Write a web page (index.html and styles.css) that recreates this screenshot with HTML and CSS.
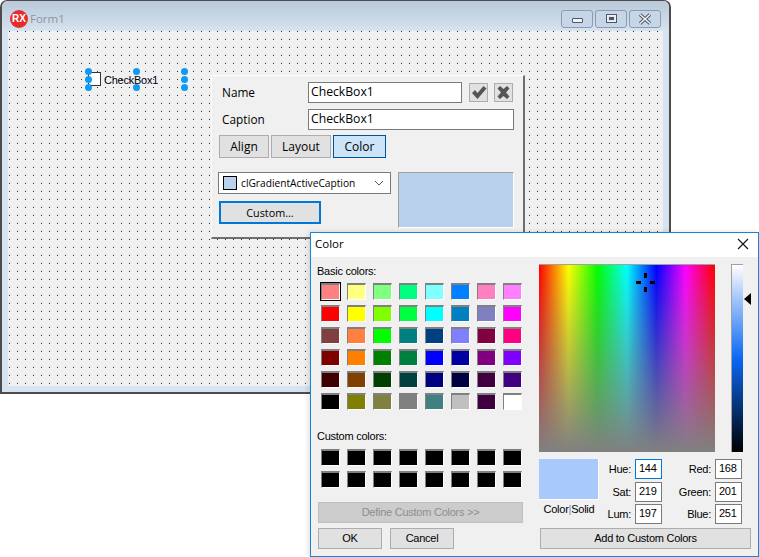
FILE: index.html
```html
<!DOCTYPE html>
<html lang="en">
<head>
  <meta charset="UTF-8">
  <meta name="viewport" content="width=device-width, initial-scale=1.0">
  <title>Form1</title>
  <link rel="stylesheet" href="styles.css">
</head>
<body>

<!-- designer form -->
<div class="form-window">
  <div class="form-title">
    <div class="rx-logo">RX</div>
    <div class="form-caption">Form1</div>
    <div class="title-buttons">
      <div class="title-btn"><span class="ico-min"></span></div>
      <div class="title-btn"><span class="ico-max"></span></div>
      <div class="title-btn">
        <svg width="14" height="12" viewBox="0 0 14 12"><path d="M2 1.5 L12 10.5 M12 1.5 L2 10.5" stroke="#4d5666" stroke-width="3.4" fill="none"/><path d="M2 1.5 L12 10.5 M12 1.5 L2 10.5" stroke="#f4f6f9" stroke-width="1.4" fill="none"/></svg>
      </div>
    </div>
  </div>
  <div class="form-client"></div>
</div>

<!-- selected checkbox on the form -->
<div class="selection">
  <div class="check-box"></div>
  <div class="check-text">CheckBox1</div>
  <span class="handle h-tl"></span>
  <span class="handle h-tm"></span>
  <span class="handle h-tr"></span>
  <span class="handle h-ml"></span>
  <span class="handle h-mr"></span>
  <span class="handle h-bl"></span>
  <span class="handle h-bm"></span>
  <span class="handle h-br"></span>
</div>

<!-- inspector popup -->
<div class="panel">
  <div class="panel-row">
    <label class="panel-label">Name</label>
    <div class="edit edit-name">CheckBox1</div>
    <div class="mini-btn">
      <svg width="16" height="15" viewBox="0 0 16 15"><path d="M1 8 L4 5 L6.5 8 L12.5 1 L15.5 3.5 L6.5 14 Z" fill="#555"/></svg>
    </div>
    <div class="mini-btn">
      <svg width="15" height="15" viewBox="0 0 15 15"><path d="M1.5 3.5 L4 1 L7.5 4 L11 1 L13.5 3.5 L10 7.5 L13.5 11.5 L11 14 L7.5 11 L4 14 L1.5 11.5 L5 7.5 Z" fill="#555"/></svg>
    </div>
  </div>
  <div class="panel-row row-caption">
    <label class="panel-label">Caption</label>
    <div class="edit edit-caption">CheckBox1</div>
  </div>
  <div class="tabs">
    <div class="tab tab-align">Align</div>
    <div class="tab tab-layout">Layout</div>
    <div class="tab tab-color">Color</div>
  </div>
  <div class="color-area">
    <div class="color-left">
      <div class="combo">
        <span class="combo-swatch"></span>
        <span class="combo-text">clGradientActiveCaption</span>
        <svg class="combo-arrow" width="10" height="6" viewBox="0 0 10 6"><path d="M1 1 L5 5 L9 1" stroke="#555" fill="none"/></svg>
      </div>
      <div class="custom-btn">Custom...</div>
    </div>
    <div class="color-preview"></div>
  </div>
</div>

<!-- windows color dialog -->
<div class="dialog">
  <div class="dialog-title">
    <span>Color</span>
    <svg width="12" height="12" viewBox="0 0 12 12"><path d="M1 1 L11 11 M11 1 L1 11" stroke="#111" stroke-width="1.1" fill="none"/></svg>
  </div>
  <div class="dialog-body">
    <div class="dlg-left">
      <div class="dlg-label">Basic colors:</div>
      <div class="swatches">
        <span class="swatch selected" style="background:#ff8080"></span>
        <span class="swatch" style="background:#ffff80"></span>
        <span class="swatch" style="background:#80ff80"></span>
        <span class="swatch" style="background:#00ff80"></span>
        <span class="swatch" style="background:#80ffff"></span>
        <span class="swatch" style="background:#0080ff"></span>
        <span class="swatch" style="background:#ff80c0"></span>
        <span class="swatch" style="background:#ff80ff"></span>
        <span class="swatch" style="background:#ff0000"></span>
        <span class="swatch" style="background:#ffff00"></span>
        <span class="swatch" style="background:#80ff00"></span>
        <span class="swatch" style="background:#00ff40"></span>
        <span class="swatch" style="background:#00ffff"></span>
        <span class="swatch" style="background:#0080c0"></span>
        <span class="swatch" style="background:#8080c0"></span>
        <span class="swatch" style="background:#ff00ff"></span>
        <span class="swatch" style="background:#804040"></span>
        <span class="swatch" style="background:#ff8040"></span>
        <span class="swatch" style="background:#00ff00"></span>
        <span class="swatch" style="background:#008080"></span>
        <span class="swatch" style="background:#004080"></span>
        <span class="swatch" style="background:#8080ff"></span>
        <span class="swatch" style="background:#800040"></span>
        <span class="swatch" style="background:#ff0080"></span>
        <span class="swatch" style="background:#800000"></span>
        <span class="swatch" style="background:#ff8000"></span>
        <span class="swatch" style="background:#008000"></span>
        <span class="swatch" style="background:#008040"></span>
        <span class="swatch" style="background:#0000ff"></span>
        <span class="swatch" style="background:#0000a0"></span>
        <span class="swatch" style="background:#800080"></span>
        <span class="swatch" style="background:#8000ff"></span>
        <span class="swatch" style="background:#400000"></span>
        <span class="swatch" style="background:#804000"></span>
        <span class="swatch" style="background:#004000"></span>
        <span class="swatch" style="background:#004040"></span>
        <span class="swatch" style="background:#000080"></span>
        <span class="swatch" style="background:#000040"></span>
        <span class="swatch" style="background:#400040"></span>
        <span class="swatch" style="background:#400080"></span>
        <span class="swatch" style="background:#000000"></span>
        <span class="swatch" style="background:#808000"></span>
        <span class="swatch" style="background:#808040"></span>
        <span class="swatch" style="background:#808080"></span>
        <span class="swatch" style="background:#408080"></span>
        <span class="swatch" style="background:#c0c0c0"></span>
        <span class="swatch" style="background:#400040"></span>
        <span class="swatch" style="background:#ffffff"></span>
      </div>
      <div class="dlg-label label-custom">Custom colors:</div>
      <div class="swatches">
        <span class="swatch"></span><span class="swatch"></span><span class="swatch"></span><span class="swatch"></span>
        <span class="swatch"></span><span class="swatch"></span><span class="swatch"></span><span class="swatch"></span>
        <span class="swatch"></span><span class="swatch"></span><span class="swatch"></span><span class="swatch"></span>
        <span class="swatch"></span><span class="swatch"></span><span class="swatch"></span><span class="swatch"></span>
      </div>
      <div class="dlg-btn btn-define">Define Custom Colors &gt;&gt;</div>
      <div class="ok-row">
        <div class="dlg-btn btn-ok">OK</div>
        <div class="dlg-btn btn-cancel">Cancel</div>
      </div>
    </div>

    <div class="dlg-right">
      <div class="picker-row">
        <div class="spectrum">
          <span class="cross cross-t"></span>
          <span class="cross cross-b"></span>
          <span class="cross cross-l"></span>
          <span class="cross cross-r"></span>
        </div>
        <div class="lum-bar"></div>
        <div class="lum-arrow"></div>
      </div>
      <div class="values-row">
        <div class="solid-col">
          <div class="solid-box"></div>
          <div class="solid-text">Color<span class="solid-sep">|</span>Solid</div>
        </div>
        <div class="fields">
          <span class="f-label">Hue:</span><span class="f-input focused">144</span>
          <span class="f-label">Red:</span><span class="f-input">168</span>
          <span class="f-label">Sat:</span><span class="f-input">219</span>
          <span class="f-label">Green:</span><span class="f-input">201</span>
          <span class="f-label">Lum:</span><span class="f-input">197</span>
          <span class="f-label">Blue:</span><span class="f-input">251</span>
        </div>
      </div>
      <div class="dlg-btn btn-add">Add to Custom Colors</div>
    </div>
  </div>
</div>

</body>
</html>
```

FILE: styles.css
```css
* { box-sizing: border-box; }

html, body {
  margin: 0;
  height: 100%;
  background: #fff;
  overflow: hidden;
}

body {
  position: relative;
  font-family: "Open Sans", "Noto Sans", sans-serif;
  font-size: 12px;
  color: #000;
}

/* designer form */
.form-window {
  position: absolute;
  left: 0;
  top: 0;
  width: 671px;
  height: 394px;
  display: flex;
  flex-direction: column;
  background: #d6e3f0;
  border: 2px solid #4c4c4c;
  border-top-width: 1px;
  border-radius: 7px 7px 0 0;
}

.form-title {
  height: 30px;
  display: flex;
  align-items: center;
  padding: 5px 8px 0 8px;
  background: linear-gradient(#b9c9d9, #d6e3f0);
  border-radius: 6px 6px 0 0;
}

.rx-logo {
  width: 18px;
  height: 18px;
  border-radius: 50%;
  background: #e62b2b;
  color: #fff;
  font-family: "Liberation Sans", sans-serif;
  font-weight: bold;
  font-size: 10px;
  line-height: 18px;
  text-align: center;
}

.form-caption {
  margin-left: 2px;
  font-size: 11.5px;
  color: #8f959b;
}

.title-buttons {
  margin-left: auto;
  display: flex;
  gap: 2px;
}

.title-btn {
  width: 32px;
  height: 18px;
  display: flex;
  align-items: center;
  justify-content: center;
  border: 1px solid #8c9ab3;
  border-radius: 3px;
  background: #c6d6e6;
}

.ico-min {
  width: 11px;
  height: 5px;
  margin-top: 4px;
  background: #f0f3f7;
  border: 1px solid #4d5666;
  border-radius: 1px;
}

.ico-max {
  width: 11px;
  height: 9px;
  border: 1px solid #4d5666;
  background: linear-gradient(#4d5666, #4d5666) center / 5px 3px no-repeat, #dfe6ef;
  box-shadow: inset 0 0 0 1px #eef2f6;
}

/* grid dots: two layers of 7px bars leave 1px of the dark colour every 8px */
.form-client {
  margin: 0 6px 6px 6px;
  flex: 1;
  background-color: #2c2c2c;
  background-image:
    linear-gradient(#f0f0f0 7px, transparent 7px),
    linear-gradient(to right, #f0f0f0 7px, transparent 7px);
  background-position: 2px 1px;
  background-size: 8px 8px;
}

/* selected checkbox + handles */
.selection {
  position: absolute;
  left: 88px;
  top: 71px;
  width: 96px;
  height: 16px;
  display: flex;
  align-items: center;
}

.check-box {
  width: 13px;
  height: 14px;
  background: #fff;
  border: 1px solid #333;
}

.check-text {
  margin: 1px 0 0 3px;
  font-family: "Liberation Sans", sans-serif;
  font-size: 11px;
  letter-spacing: -0.25px;
  color: #001;
}

.handle {
  position: absolute;
  width: 7px;
  height: 7px;
  margin: -3px 0 0 -3px;
  border-radius: 50%;
  background: #0d9cf2;
}

.h-tl { left: 0; top: 0; }
.h-tm { left: 48px; top: 0; }
.h-tr { left: 96px; top: 0; }
.h-ml { left: 0; top: 8px; }
.h-mr { left: 96px; top: 8px; }
.h-bl { left: 0; top: 16px; }
.h-bm { left: 48px; top: 16px; }
.h-br { left: 96px; top: 16px; }

/* inspector popup */
.panel {
  position: absolute;
  left: 211px;
  top: 75px;
  width: 314px;
  height: 164px;
  padding: 6px 9px 0 7px;
  background: #f0f0f0;
  border: 1px solid #fff;
  border-width: 1px 2px 2px 1px;
  border-color: #fff #6e6e6e #6e6e6e #fff;
}

.panel-row {
  display: flex;
  align-items: center;
  height: 21px;
}

.row-caption {
  margin-top: 6px;
}

.panel-label {
  width: 89px;
  padding: 0 0 2px 3px;
  font-size: 11.8px;
}

.edit {
  height: 21px;
  padding-left: 2px;
  font-size: 12.2px;
  line-height: 17px;
  background: #fff;
  border: 1px solid #7a7a7a;
}

.edit-name { width: 154px; }
.edit-caption { width: 206px; }

.mini-btn {
  width: 19px;
  height: 19px;
  margin-left: 7px;
  display: flex;
  align-items: center;
  justify-content: center;
  background: #e1e1e1;
  border: 1px solid #adadad;
}

.mini-btn + .mini-btn { margin-left: 6px; }

.tabs {
  display: flex;
  gap: 2px;
  margin-top: 5px;
}

.tab {
  height: 23px;
  text-align: center;
  font-size: 12px;
  line-height: 21px;
  background: #e1e1e1;
  border: 1px solid #adadad;
}

.tab-align { width: 50px; }
.tab-layout { width: 60px; }
.tab-color {
  width: 53px;
  background: #cce4f7;
  border-color: #005499;
}

.color-area {
  display: flex;
  margin-top: 14px;
  margin-left: -1px;
}

.color-left {
  width: 180px;
}

.combo {
  width: 173px;
  height: 22px;
  display: flex;
  align-items: center;
  padding: 0 6px 0 4px;
  background: #fff;
  border: 1px solid #7a7a7a;
}

.combo-swatch {
  width: 14px;
  height: 14px;
  background: #b9d1ea;
  border: 1px solid #000;
}

.combo-text {
  margin-left: 4px;
  font-size: 10.2px;
}

.combo-arrow { margin-left: auto; }

.custom-btn {
  width: 102px;
  height: 23px;
  margin: 7px 0 0 1px;
  text-align: center;
  font-size: 10.8px;
  line-height: 19px;
  background: #e1e1e1;
  border: 2px solid #0078d7;
}

.color-preview {
  width: 116px;
  height: 56px;
  background: #b9d1ea;
  border: 1px solid #a0a0a0;
  border-right-color: #fff;
  border-bottom-color: #fff;
}

/* color dialog */
.dialog {
  position: absolute;
  left: 310px;
  top: 232px;
  width: 449px;
  height: 325px;
  display: flex;
  flex-direction: column;
  background: #f0f0f0;
  border: 1px solid #1883d7;
  box-shadow: -2px 0 5px rgba(0,0,0,0.12);
  font-family: "Liberation Sans", sans-serif;
}

.dialog-title {
  height: 24px;
  display: flex;
  align-items: center;
  justify-content: space-between;
  padding: 0 9px 3px 4px;
  background: #fff;
  font-family: "Open Sans", sans-serif;
  font-size: 11.5px;
}

.dialog-body {
  flex: 1;
  display: flex;
  padding: 7px 0 0 6px;
  font-size: 11px;
  letter-spacing: -0.25px;
}

.dlg-left { width: 206px; }

.dlg-label {
  height: 14px;
  line-height: 14px;
}

.label-custom {
  height: 15px;
  margin-top: 19px;
}

.swatches {
  display: grid;
  grid-template-columns: repeat(8, 19px);
  grid-auto-rows: 17px;
  column-gap: 7px;
  row-gap: 5px;
  margin: 5px 0 0 4px;
}

.swatch {
  position: relative;
  background: #000;
  border: 1px solid;
  border-width: 2px 1px 1px 1px;
  border-color: #808080 #fff #fff #808080;
}

.selected::after {
  content: "";
  position: absolute;
  left: -2px;
  top: -3px;
  right: -2px;
  bottom: -2px;
  border: 1px solid #000;
}

.dlg-btn {
  height: 21px;
  text-align: center;
  line-height: 19px;
  background: #e1e1e1;
  border: 1px solid #adadad;
}

.btn-define {
  width: 205px;
  margin: 14px 0 0 1px;
  color: #8e8e8e;
  background: #cccccc;
  border-color: #bfbfbf;
}

.ok-row {
  display: flex;
  gap: 8px;
  margin: 5px 0 0 1px;
}

.btn-ok { width: 64px; }
.btn-cancel { width: 64px; }

.dlg-right {
  width: 220px;
  margin-left: 16px;
}

.picker-row {
  display: flex;
  position: relative;
  height: 188px;
}

.spectrum {
  position: relative;
  width: 176px;
  background:
    linear-gradient(rgba(128,128,128,0), #808080),
    linear-gradient(to right, #f00, #ff0 16.7%, #0f0 33.3%, #0ff 50%, #00f 66.7%, #f0f 83.3%, #f00);
  border-top: 1px solid #a0a0a0;
}

.cross {
  position: absolute;
  background: #000;
}

.cross-t { left: 105px; top: 8px; width: 3px; height: 5px; }
.cross-b { left: 105px; top: 22px; width: 3px; height: 5px; }
.cross-l { left: 97px; top: 16px; width: 5px; height: 3px; }
.cross-r { left: 111px; top: 16px; width: 5px; height: 3px; }

.lum-bar {
  width: 12px;
  margin-left: 16px;
  background: linear-gradient(#fff, #a8c9fb 17%, #0b68f4 50%, #000);
  border: 1px solid #a0a0a0;
  border-width: 1px 0 0 1px;
}

.lum-arrow {
  position: absolute;
  left: 205px;
  top: 29px;
  width: 0;
  height: 0;
  border: 6px solid transparent;
  border-left: 0;
  border-right: 7px solid #000;
}

.values-row {
  display: flex;
  margin-top: 7px;
}

.solid-col { width: 60px; }

.solid-box {
  height: 41px;
  background: #a8c9fb;
  border: 1px solid #fff;
  border-width: 0 1px 1px 0;
}

.solid-text {
  margin-top: 3px;
  text-align: center;
}

.solid-sep { color: #5b8fc7; }

.fields {
  display: grid;
  grid-template-columns: 32px 27px 45px 27px;
  grid-auto-rows: 20px;
  column-gap: 4px;
  row-gap: 2.5px;
}

.fields .f-label {
  text-align: right;
  line-height: 20px;
}

.f-input {
  background: #fff;
  border: 1px solid #7a7a7a;
  padding-left: 3px;
  line-height: 17px;
}

.focused { border-color: #0078d7; }

.btn-add {
  width: 211px;
  margin: 4px 0 0 1px;
}
```
